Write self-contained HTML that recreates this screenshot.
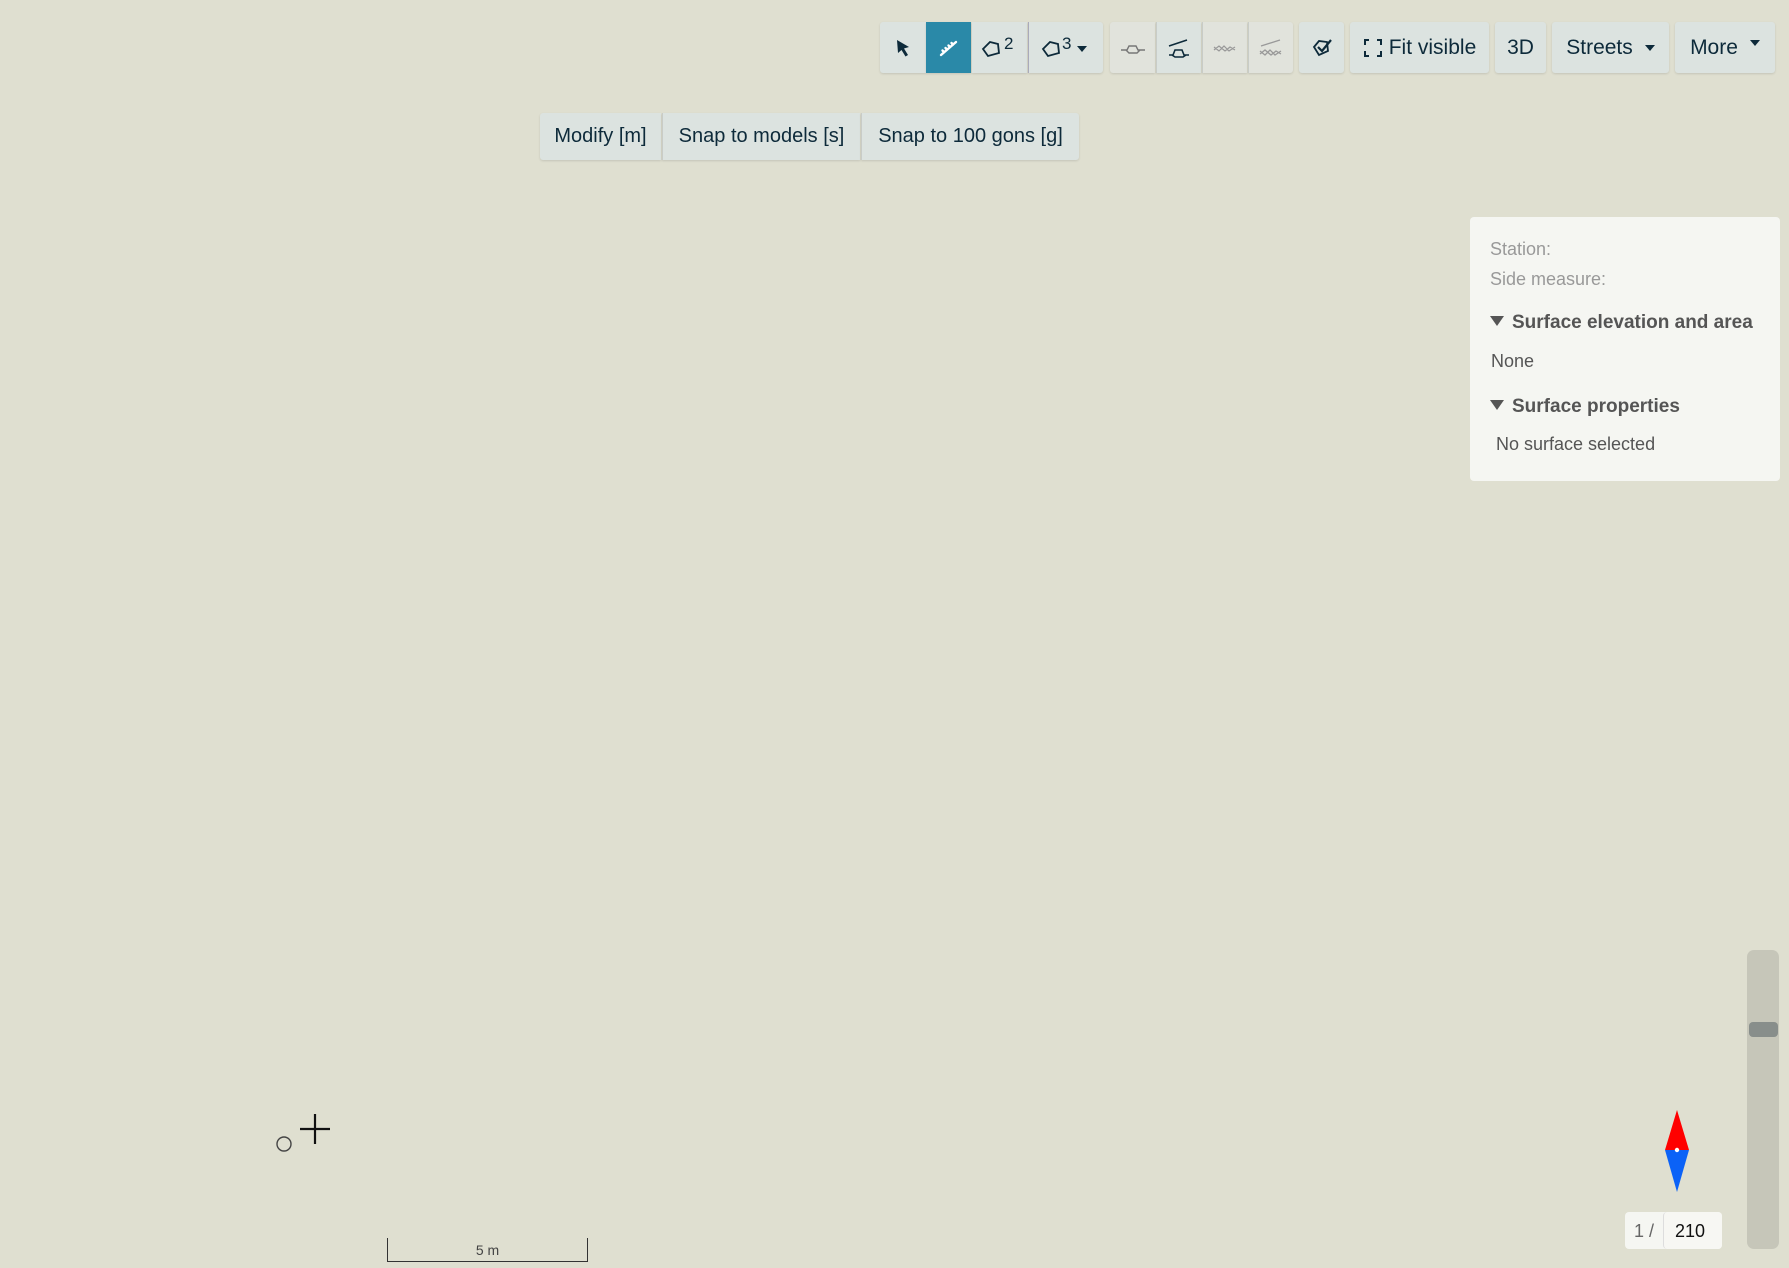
<!DOCTYPE html>
<html><head><meta charset="utf-8"><style>
*{box-sizing:border-box;margin:0;padding:0}
body{width:1789px;height:1268px;background:#dfdfd0;font-family:"Liberation Sans",sans-serif;position:relative;overflow:hidden}
.b{position:absolute;top:22px;height:51px;background:#dce3e0;display:flex;align-items:center;justify-content:center;color:#0d2a3a;font-size:21px;box-shadow:0 1px 2px rgba(0,0,0,.12)}
.d{background:#e1e3dc}
.r{border-radius:3px}
.s{position:absolute;top:113px;height:47px;background:#dce3e0;display:flex;align-items:center;justify-content:center;color:#0d2a3a;font-size:20px;box-shadow:0 1px 2px rgba(0,0,0,.12)}
.p{position:absolute;left:1470px;top:217px;width:310px;height:264px;background:#f5f6f2;border-radius:4px;color:#555}
.p div{position:absolute;left:20px;font-size:18px;white-space:nowrap}
.g{color:#999}
.h{font-weight:bold;color:#555;font-size:19px!important}
.tri{display:inline-block;width:0;height:0;border-left:7px solid transparent;border-right:7px solid transparent;border-top:10px solid #555;margin-right:8px;vertical-align:2px}
</style></head><body>
<div class="b r" style="left:880px;width:46px;border-radius:3px 0 0 3px"><svg width="22" height="22" viewBox="0 0 22 22"><path d="M5 3 L17 10 L12 11.5 L16 18 L13.5 19.5 L9.5 13 L6 16 Z" fill="#0d2a3a"/></svg></div>
<div class="b" style="left:926px;width:45px;background:#2a89a8"><svg width="26" height="26" viewBox="0 0 26 26"><g stroke="#fff" stroke-width="2.4" fill="none" stroke-linecap="round"><path d="M5 20 L20 7"/><path d="M8 17 L6.5 15.5M11 14.5 L9.5 13M14 12 L12.5 10.5M17 9.5 L15.5 8"/></g></svg></div>
<div class="b" style="left:972px;width:55px"><svg width="44" height="26" viewBox="0 0 44 26"><path d="M5 14 L12 7 L20 9 L21 18 L10 21 Z" fill="none" stroke="#0d2a3a" stroke-width="1.8"/><text x="26" y="14" font-size="17" fill="#0d2a3a" font-family="Liberation Sans">2</text></svg></div>
<div class="b" style="left:1028px;width:75px;border-left:1px solid #aab;border-radius:0 3px 3px 0"><svg width="56" height="26" viewBox="0 0 56 26"><path d="M5 14 L12 7 L20 9 L21 18 L10 21 Z" fill="none" stroke="#0d2a3a" stroke-width="1.8"/><text x="24" y="14" font-size="17" fill="#0d2a3a" font-family="Liberation Sans">3</text><path d="M39 11 L49 11 L44 17 Z" fill="#0d2a3a"/></svg></div>
<div class="b d" style="left:1110px;width:45px;border-radius:3px 0 0 3px"><svg width="30" height="20" viewBox="0 0 30 20"><path d="M3 12 L9 12 L11 8 L18 8 L20 12 L27 12 M8 12 L11 15 L19 15 L22 12" fill="none" stroke="#777" stroke-width="1.4"/></svg></div>
<div class="b" style="left:1156px;width:45px;border-left:1px solid #c8ccc8"><svg width="30" height="24" viewBox="0 0 30 24"><path d="M5 10 L23 4 M5 19 L9 19 L11 14 L18 14 L20 19 L25 19 M8 19 L11 21 L19 21 L22 19" fill="none" stroke="#0d2a3a" stroke-width="1.6"/></svg></div>
<div class="b d" style="left:1202px;width:45px;border-left:1px solid #c8ccc8"><svg width="30" height="20" viewBox="0 0 30 20"><path d="M4 9 L9 13 L14 8 L19 13 L25 9 M4 12 L9 8 L15 13 L20 9 L25 12" fill="none" stroke="#999" stroke-width="1.2"/></svg></div>
<div class="b d" style="left:1248px;width:45px;border-left:1px solid #c8ccc8;border-radius:0 3px 3px 0"><svg width="30" height="24" viewBox="0 0 30 24"><path d="M5 10 L24 4 M4 15 L9 19 L14 14 L19 19 L25 15 M4 18 L9 14 L15 19 L20 15 L25 18" fill="none" stroke="#999" stroke-width="1.3"/></svg></div>
<div class="b r" style="left:1299px;width:45px"><svg width="26" height="26" viewBox="0 0 26 26"><path d="M5 12 L10 6 L18 7 L19 16 L10 20 Z" fill="none" stroke="#0d2a3a" stroke-width="1.8"/><path d="M9 12 L13 16 L22 5" fill="none" stroke="#0d2a3a" stroke-width="2.2"/></svg></div>
<div class="b r" style="left:1350px;width:139px"><svg width="20" height="20" viewBox="0 0 20 20" style="margin-right:6px"><path d="M2 7 V2 H6 M14 2 H18 V7 M18 13 V18 H14 M6 18 H2 V13" fill="none" stroke="#0d2a3a" stroke-width="2"/></svg>Fit visible</div>
<div class="b r" style="left:1495px;width:51px">3D</div>
<div class="b r" style="left:1552px;width:117px">Streets<span style="display:inline-block;border-left:5px solid transparent;border-right:5px solid transparent;border-top:6px solid #0d2a3a;margin-left:12px"></span></div>
<div class="b r" style="left:1675px;width:100px">More<span style="display:inline-block;border-left:5px solid transparent;border-right:5px solid transparent;border-top:6px solid #0d2a3a;margin-left:12px;margin-top:-10px"></span></div>
<div class="s" style="left:540px;width:121px;border-radius:3px 0 0 3px">Modify [m]</div>
<div class="s" style="left:662px;width:198px;border-left:1px solid #c8ccc8">Snap to models [s]</div>
<div class="s" style="left:861px;width:218px;border-left:1px solid #c8ccc8;border-radius:0 3px 3px 0">Snap to 100 gons [g]</div>
<div class="p">
<div class="g" style="top:22px">Station:</div>
<div class="g" style="top:52px">Side measure:</div>
<div class="h" style="top:95px"><span class="tri"></span>Surface elevation and area</div>
<div style="top:134px;left:21px">None</div>
<div class="h" style="top:179px"><span class="tri"></span>Surface properties</div>
<div style="top:217px;left:26px">No surface selected</div>
</div>
<svg style="position:absolute;left:270px;top:1110px" width="60" height="50"><path d="M45 4 V34 M30 19 H60" stroke="#111" stroke-width="2.2"/><circle cx="14" cy="34" r="7" fill="none" stroke="#444" stroke-width="1.4"/></svg>
<div style="position:absolute;left:387px;top:1238px;width:201px;height:24px;border:1px solid #333;border-top:none"></div>
<div style="position:absolute;left:387px;top:1242px;width:201px;text-align:center;font-size:14px;color:#444">5 m</div>
<svg style="position:absolute;left:1660px;top:1105px" width="35" height="92"><path d="M17 5 L29 45 L5 45 Z" fill="#f00"/><path d="M5 45 L29 45 L17 87 Z" fill="#0b62f7"/><circle cx="17" cy="45" r="2.2" fill="#fff"/></svg>
<div style="position:absolute;left:1625px;top:1212px;width:97px;height:37px;background:#f5f6f2;border-radius:4px;font-size:18px">
<span style="position:absolute;left:9px;top:9px;color:#666">1 /</span>
<span style="position:absolute;left:38px;top:0;width:59px;height:37px;border-left:1px solid #ddd;border-radius:4px;background:#f7f7f3;padding:9px 0 0 11px;color:#111">210</span></div>
<div style="position:absolute;left:1747px;top:950px;width:32px;height:299px;background:#c6c6b9;border-radius:7px"></div>
<div style="position:absolute;left:1749px;top:1022px;width:29px;height:15px;background:#888e8b;border-radius:4px"></div>
</body></html>
